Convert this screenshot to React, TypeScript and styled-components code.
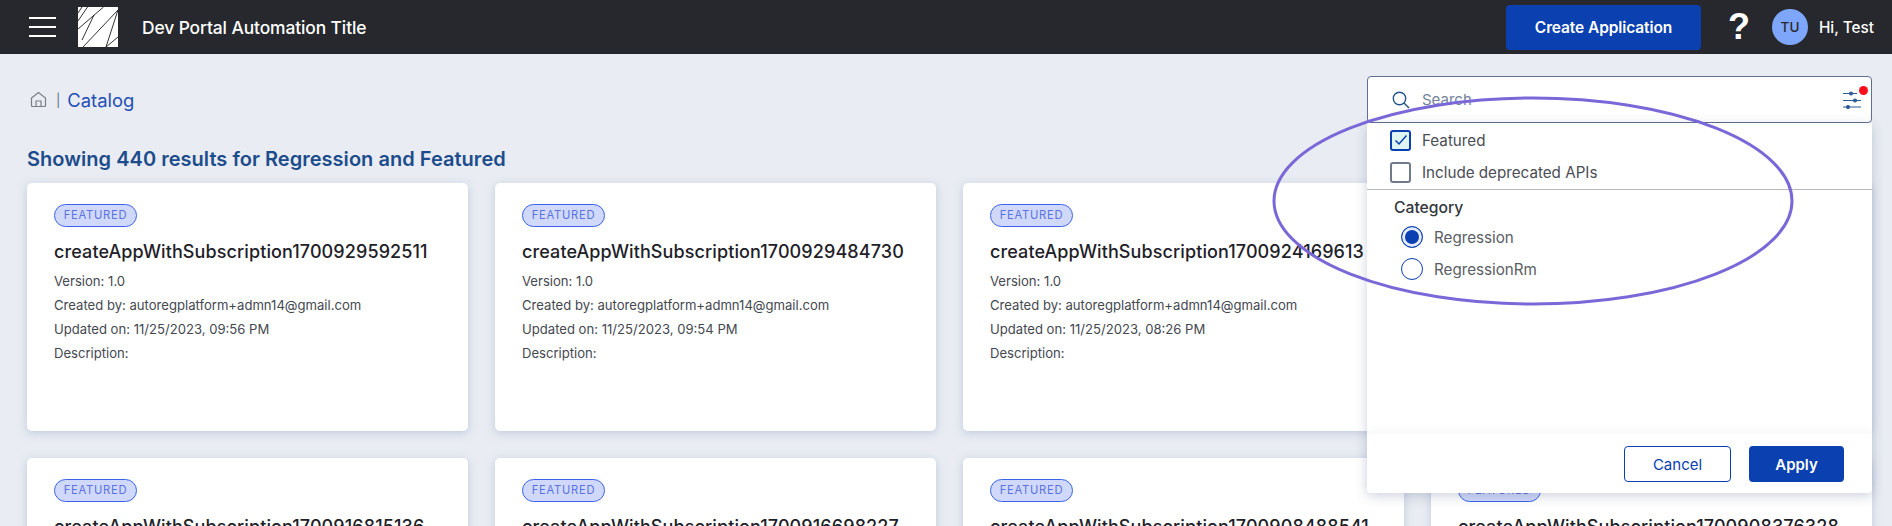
import React from 'react';
import styled, {createGlobalStyle} from 'styled-components';

interface card {
  name: string,
  version?: string,
  author?: string,
  updated?: string,
}

const cards: card[] = [
  {name: 'createAppWithSubscription1700929592511', version: '1.0', author: 'autoregplatform+admn14@gmail.com', updated: '11/25/2023, 09:56 PM'},
  {name: 'createAppWithSubscription1700929484730', version: '1.0', author: 'autoregplatform+admn14@gmail.com', updated: '11/25/2023, 09:54 PM'},
  {name: 'createAppWithSubscription1700924169613', version: '1.0', author: 'autoregplatform+admn14@gmail.com', updated: '11/25/2023, 08:26 PM'},
  {name: ''},
  {name: 'createAppWithSubscription1700916815136'},
  {name: 'createAppWithSubscription1700916698227'},
  {name: 'createAppWithSubscription1700908488541'},
  {name: 'createAppWithSubscription1700908376328'},
];

const App: React.FC = () => {
  return (
    <Page>
      <GlobalStyle />
      <Header>
        <HeaderLeft>
          <Burger><span /><span /><span /></Burger>
          <Logo viewBox="0 0 40 40">
            <rect width="40" height="40" fill="#fff" />
            <path
              d="M9.5 0L0 14M4 0L0 6M25.5 0L0 22M40 3L5 40M40 3L28 40M40 30L28 40M16 8L4 33"
              stroke="#1c1c1c"
              strokeWidth="0.9"
              fill="none"
            />
          </Logo>
          <AppTitle>Dev Portal Automation Title</AppTitle>
        </HeaderLeft>
        <HeaderRight>
          <CreateButton>Create Application</CreateButton>
          <Help>?</Help>
          <Avatar>TU</Avatar>
          <Greeting>Hi, Test</Greeting>
        </HeaderRight>
      </Header>
      <Main>
        <Toolbar>
          <Breadcrumb>
            <svg width="17" height="17" viewBox="0 0 17 17" fill="none" stroke="#7b7f87" strokeWidth="1.2">
              <path d="M1.5 7L8.5 1.5L15.5 7V14.5a1 1 0 0 1-1 1h-12a1 1 0 0 1-1-1z" />
              <path d="M6 15.5V10h5v5.5" />
            </svg>
            <Separator>|</Separator>
            <Crumb>Catalog</Crumb>
          </Breadcrumb>
          <SearchWrap>
            <SearchBox>
              <svg width="18" height="18" viewBox="0 0 18 18" fill="none" stroke="#23548f" strokeWidth="1.4">
                <circle cx="7.5" cy="7.5" r="6.2" />
                <path d="M12 12l5 5" />
              </svg>
              <SearchText>Search</SearchText>
              <FilterButton>
                <svg width="18" height="18" viewBox="0 0 18 18" fill="#2b5a98" stroke="#2b5a98" strokeWidth="1.1">
                  <path d="M0 2.5H14M0 9.5H18M0 16H18" fill="none" />
                  <circle cx="8" cy="2.5" r="1.5" />
                  <circle cx="12" cy="9.5" r="1.5" />
                  <circle cx="5" cy="16" r="1.5" />
                </svg>
                <RedDot />
              </FilterButton>
            </SearchBox>
            <Popup>
              <PopupBody>
                <CheckList>
                  <CheckRow>
                    <CheckBox $checked>
                      <svg width="14" height="12" viewBox="0 0 14 12" fill="none" stroke="#0a3fb0" strokeWidth="1.5">
                        <path d="M1.5 6.5L5 10L12.5 1.5" />
                      </svg>
                    </CheckBox>
                    Featured
                  </CheckRow>
                  <CheckRow>
                    <CheckBox />
                    Include deprecated APIs
                  </CheckRow>
                </CheckList>
                <CategorySection>
                  <CategoryTitle>Category</CategoryTitle>
                  <RadioRow><Radio $checked />Regression</RadioRow>
                  <RadioRow><Radio />RegressionRm</RadioRow>
                </CategorySection>
              </PopupBody>
              <PopupFooter>
                <CancelButton>Cancel</CancelButton>
                <ApplyButton>Apply</ApplyButton>
              </PopupFooter>
            </Popup>
          </SearchWrap>
        </Toolbar>
        <ResultsHeading>Showing 440 results for Regression and Featured</ResultsHeading>
        <CardGrid>
          {cards.map((c: card, id: number) => {
            return (
              <Card key={id}>
                <Badge>FEATURED</Badge>
                <CardTitle>{c.name}</CardTitle>
                {c.version && <CardLine>Version: {c.version}</CardLine>}
                {c.author && <CardLine>Created by: {c.author}</CardLine>}
                {c.updated && <CardLine>Updated on: {c.updated}</CardLine>}
                {c.version && <CardLine>Description:</CardLine>}
              </Card>
            )
          })}
        </CardGrid>
      </Main>
      <Annotation viewBox="0 0 1892 526">
        <ellipse cx="1533" cy="201" rx="259" ry="103" fill="none" stroke="#7b68d8" strokeWidth="3" />
      </Annotation>
    </Page>
  )
};

export default App;


const GlobalStyle = createGlobalStyle`
  html, body {
    margin: 0;
    height: 100%;
    overflow: hidden;
  }
  body {
    font-family: Inter, "Noto Sans", "Liberation Sans", sans-serif;
    background: #e9ecf2;
  }
`;
const Page = styled.div`
  position: relative;
  height: 526px;
  overflow: hidden;
`;
const Header = styled.header`
  display: flex;
  justify-content: space-between;
  align-items: center;
  height: 54px;
  padding: 0 18px 0 29px;
  background: #26282d;
  color: #fff;
`;
const HeaderLeft = styled.div`
  display: flex;
  align-items: center;
`;
const Burger = styled.div`
  display: flex;
  flex-direction: column;
  gap: 7px;
  width: 27px;
  margin-right: 22px;
  span {
    display: block;
    height: 2px;
    background: #fff;
  }
`;
const Logo = styled.svg`
  display: block;
  width: 40px;
  height: 40px;
`;
const AppTitle = styled.span`
  margin-left: 24px;
  font-size: 17.4px;
  font-weight: 500;
  letter-spacing: -0.1px;
`;
const HeaderRight = styled.div`
  display: flex;
  align-items: center;
`;
const CreateButton = styled.button`
  width: 195px;
  height: 45px;
  border: none;
  border-radius: 4px;
  background: #0a40b0;
  color: #fff;
  font: 600 15.5px Inter, sans-serif;
  letter-spacing: -0.1px;
`;
const Help = styled.span`
  width: 20px;
  margin: 0 24px 0 27px;
  font: 700 36px "Liberation Sans", sans-serif;
  text-align: center;
`;
const Avatar = styled.div`
  display: flex;
  align-items: center;
  justify-content: center;
  width: 36px;
  height: 36px;
  border-radius: 50%;
  background: #7ea6fa;
  color: #26282d;
  font-size: 13.5px;
  font-weight: 500;
`;
const Greeting = styled.span`
  margin-left: 11px;
  font-size: 15.3px;
  font-weight: 500;
`;
const Main = styled.main`
  padding: 0 20px 0 27px;
`;
const Toolbar = styled.div`
  display: flex;
  justify-content: space-between;
  align-items: center;
  padding-top: 22px;
`;
const Breadcrumb = styled.nav`
  display: flex;
  align-items: center;
  padding-left: 3px;
  svg {
    display: block;
  }
`;
const Separator = styled.span`
  margin: 0 7px 0 9px;
  color: #5a6f8f;
  font-size: 13px;
`;
const Crumb = styled.span`
  color: #1f4fb5;
  font-size: 18.4px;
`;
const SearchWrap = styled.div`
  position: relative;
  width: 505px;
`;
const SearchBox = styled.div`
  display: flex;
  align-items: center;
  box-sizing: border-box;
  height: 47px;
  padding: 0 10px 0 24px;
  border: 1px solid #5f6f8f;
  border-radius: 4px;
  background: #fff;
`;
const SearchText = styled.span`
  flex: 1;
  margin-left: 12px;
  color: #74839c;
  font-size: 15px;
`;
const FilterButton = styled.div`
  position: relative;
  width: 18px;
  height: 18px;
  margin-right: 0;
`;
const RedDot = styled.span`
  position: absolute;
  top: -5px;
  right: -7px;
  width: 9px;
  height: 9px;
  border-radius: 50%;
  background: #fb0d1b;
`;
const Popup = styled.div`
  position: absolute;
  top: 100%;
  left: 0;
  right: 0;
  z-index: 2;
  display: flex;
  flex-direction: column;
  height: 370px;
  border-radius: 0 0 4px 4px;
  background: #fff;
  box-shadow: 0 3px 12px rgba(60, 80, 120, 0.25);
`;
const PopupBody = styled.div`
  flex: 1;
`;
const CheckList = styled.div`
  display: flex;
  flex-direction: column;
  gap: 10px;
  padding: 6px 0 6px 23px;
  border-bottom: 1px solid #b4b8c0;
`;
const CheckRow = styled.label`
  display: flex;
  align-items: center;
  height: 22px;
  color: #4a4d55;
  font-size: 15.2px;
`;
const CheckBox = styled.span<{$checked?: boolean}>`
  display: flex;
  align-items: center;
  justify-content: center;
  box-sizing: border-box;
  width: 21px;
  height: 21px;
  margin-right: 11px;
  border: 2px solid ${p => (p.$checked ? '#0a3fb0' : '#707a8c')};
  border-radius: 3px;
  background: ${p => (p.$checked ? '#def3f2' : '#fff')};
`;
const CategorySection = styled.div`
  padding: 8px 0 0 27px;
`;
const CategoryTitle = styled.div`
  margin-bottom: 4px;
  color: #33363c;
  font-size: 15.7px;
  font-weight: 500;
`;
const RadioRow = styled.label`
  display: flex;
  align-items: center;
  height: 32px;
  padding-left: 7px;
  color: #5a5d64;
  font-size: 15.2px;
`;
const Radio = styled.span<{$checked?: boolean}>`
  box-sizing: border-box;
  width: 22px;
  height: 22px;
  margin-right: 11px;
  border: 1.5px solid #0a40b0;
  border-radius: 50%;
  background: ${p => (p.$checked ? '#0a40b0' : '#fff')};
  box-shadow: ${p => (p.$checked ? 'inset 0 0 0 3px #e4ecfb' : 'none')};
`;
const PopupFooter = styled.div`
  display: flex;
  justify-content: flex-end;
  gap: 18px;
  padding: 12px 28px 11px 0;
  border-radius: 0 0 4px 4px;
  background: #fff;
  box-shadow: 0 -4px 8px rgba(60, 70, 90, 0.04);
`;
const CancelButton = styled.button`
  box-sizing: border-box;
  width: 107px;
  height: 36px;
  border: 1px solid #0a40b0;
  border-radius: 4px;
  background: #fff;
  color: #0a40b0;
  font: 400 15px Inter, sans-serif;
`;
const ApplyButton = styled.button`
  width: 95px;
  height: 36px;
  border: none;
  border-radius: 4px;
  background: #0a40b0;
  color: #fff;
  font: 600 15px Inter, sans-serif;
`;
const ResultsHeading = styled.h2`
  margin: 0;
  padding: 24px 0 11px;
  color: #1d4c8c;
  font-size: 20px;
  font-weight: 600;
  letter-spacing: 0.03px;
  line-height: 25px;
`;
const CardGrid = styled.div`
  display: grid;
  grid-template-columns: repeat(4, 1fr);
  gap: 27px;
`;
const Card = styled.article`
  box-sizing: border-box;
  height: 248px;
  padding: 20px 27px;
  border-radius: 5px;
  background: #fff;
  box-shadow: 0 2px 8px rgba(150, 170, 205, 0.5);
`;
const Badge = styled.span`
  display: inline-flex;
  align-items: center;
  justify-content: center;
  box-sizing: border-box;
  width: 83px;
  height: 23px;
  border: 1px solid #3a63e8;
  border-radius: 12px;
  background: #d0d9fb;
  color: #5a72e0;
  font-size: 11.2px;
  letter-spacing: 0.75px;
`;
const CardTitle = styled.div`
  height: 22px;
  margin: 14px 0 6px;
  color: #1e2128;
  font-size: 18px;
  font-weight: 500;
  letter-spacing: 0.1px;
  line-height: 22px;
`;
const CardLine = styled.div`
  color: #444850;
  font-size: 13.1px;
  line-height: 24px;
`;
const Annotation = styled.svg`
  position: absolute;
  top: 0;
  left: 0;
  z-index: 3;
  width: 1892px;
  height: 526px;
  pointer-events: none;
`;
